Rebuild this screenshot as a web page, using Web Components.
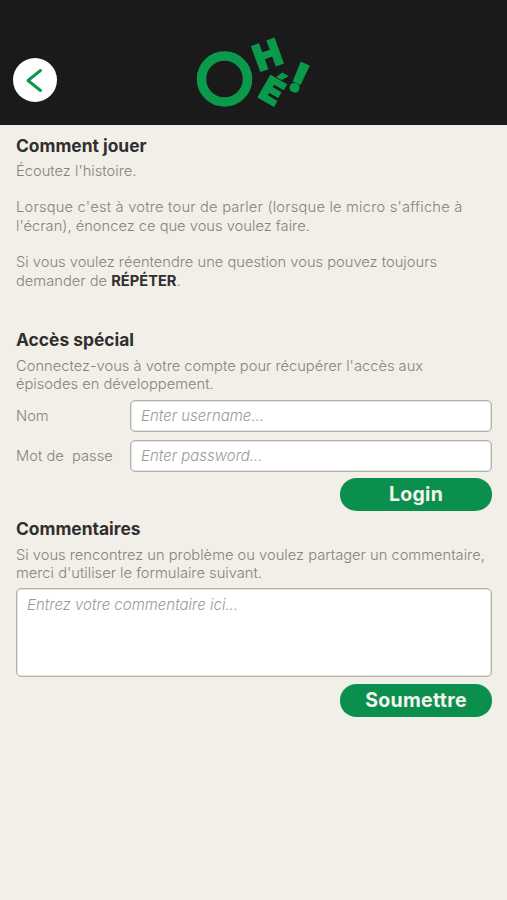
<!DOCTYPE html>
<html lang="fr">
<head>
<meta charset="utf-8">
<title>Ohé</title>
<style>
  html, body { margin: 0; height: 100%; background: #f2efe8; }
  body { font-family: Inter, "Liberation Sans", sans-serif; min-height: 900px; }
</style>
</head>
<body>
<app-header></app-header>
<main-page></main-page>

<script>
class AppHeader extends HTMLElement {
  connectedCallback() {
    this.attachShadow({ mode: 'open' });
    this.shadowRoot.innerHTML = `
      <style>
        :host { display: block; height: 125px; background: #1a1a1a; position: relative; }
        .back {
          position: absolute; left: 13px; top: 58px;
          width: 44px; height: 44px; border-radius: 50%;
          background: #fff; display: flex; align-items: center; justify-content: center;
        }
        svg { display: block; }
        .logo { position: absolute; left: 170px; top: 15px; overflow: visible; }
        text {
          font-family: Inter, "Liberation Sans", sans-serif; font-weight: 900; text-anchor: middle;
          fill: #0b9a4c; stroke: #0b9a4c; stroke-width: 1.4px;
        }
      </style>
      <div class="back">
        <svg width="20" height="26" viewBox="0 0 20 26">
          <path d="M15.5 3.5 L3 13.5 L15.5 23.5" fill="none" stroke="#0b9a4c" stroke-width="3" stroke-linecap="round" stroke-linejoin="round"/>
        </svg>
      </div>
      <svg class="logo" width="160" height="105" viewBox="0 0 160 105">
        <circle cx="54.5" cy="64" r="23" fill="none" stroke="#0b9a4c" stroke-width="9.5"/>
        <text font-size="36" transform="translate(97.5 40) rotate(-20) translate(0 13)">H</text>
        <text font-size="34" transform="translate(102 76) rotate(30) translate(0 12)">É</text>
        <text font-size="40" transform="translate(129 63) rotate(24) translate(0 14)">!</text>
      </svg>
    `;
  }
}

class InfoSection extends HTMLElement {
  connectedCallback() {
    this.attachShadow({ mode: 'open' });
    this.shadowRoot.innerHTML = `
      <style>
        :host { display: block; }
        h2 {
          margin: 0 0 var(--title-gap, 6px); font-size: 17.4px; line-height: 22px; font-weight: 700;
          color: #2f2f2f;
        }
        .body {
          font-size: 14.7px; line-height: 18.4px; font-weight: 300; color: #85837d;
        }
      </style>
      <h2>${this.getAttribute('heading')}</h2>
      <div class="body"><slot></slot></div>
    `;
  }
}

class FieldRow extends HTMLElement {
  connectedCallback() {
    this.attachShadow({ mode: 'open' });
    this.shadowRoot.innerHTML = `
      <style>
        :host { display: flex; align-items: center; height: 32px; }
        label {
          width: 114px; flex: none; font-size: 14.7px; font-weight: 300; color: #85837d;
          white-space: pre;
        }
        input {
          flex: 1; min-width: 0; height: 32px; box-sizing: border-box;
          border: 1px solid #b5b2aa; box-shadow: inset 0 0 0 .5px #c8c5bd; border-radius: 5px;
          background: #fff; padding: 0 10px; outline: none;
          font: italic 300 15px Inter, "Liberation Sans", sans-serif;
        }
        input::placeholder { color: #9a9a9a; opacity: 1; }
      </style>
      <label>${this.getAttribute('label')}</label>
      <input placeholder="${this.getAttribute('placeholder')}">
    `;
  }
}

class GreenButton extends HTMLElement {
  connectedCallback() {
    this.attachShadow({ mode: 'open' });
    this.shadowRoot.innerHTML = `
      <style>
        :host { display: flex; justify-content: flex-end; }
        button {
          width: 152px; height: 33px; padding: 0; border: 0; border-radius: 16.5px / 16px;
          background: #0b8f4d; color: #f4f4ee;
          font: 700 19.5px Inter, "Liberation Sans", sans-serif;
          letter-spacing: .3px;
        }
      </style>
      <button><slot></slot></button>
    `;
  }
}

class CommentBox extends HTMLElement {
  connectedCallback() {
    this.attachShadow({ mode: 'open' });
    this.shadowRoot.innerHTML = `
      <style>
        :host { display: block; height: 89px; }
        textarea {
          display: block; width: 100%; height: 100%; box-sizing: border-box; resize: none;
          border: 1px solid #b5b2aa; box-shadow: inset 0 0 0 .5px #c8c5bd; border-radius: 5px;
          background: #fff; padding: 6px 10px; outline: none;
          font: italic 300 15px Inter, "Liberation Sans", sans-serif;
        }
        textarea::placeholder { color: #9a9a9a; opacity: 1; }
      </style>
      <textarea placeholder="Entrez votre commentaire ici..."></textarea>
    `;
  }
}

class MainPage extends HTMLElement {
  connectedCallback() {
    this.attachShadow({ mode: 'open' });
    this.shadowRoot.innerHTML = `
      <style>
        :host { display: block; padding: 10px 15px 0 16px; }
        b { font-weight: 700; color: #2f2f2f; }
        p { margin: 0; }
        .gap { height: 18px; }
        .wide { letter-spacing: .2px; }
        .login { display: flex; flex-direction: column; gap: 8px; margin-top: 6px; }
        green-button { margin-top: 6px; }
        .s1 { --title-gap: 5px; }
        .s2 { margin-top: 39px; }
        .s3 { margin-top: 7px; }
        comment-box { margin-top: 5px; }
        .s3-btn { margin-top: 7px; }
      </style>
      <info-section class="s1" heading="Comment jouer">
        <p>Écoutez l'histoire.</p>
        <div class="gap"></div>
        <p><span class="wide">Lorsque c'est à votre tour de parler (lorsque le micro s'affiche à</span> l'écran), énoncez ce que vous voulez faire.</p>
        <div class="gap"></div>
        <p>Si vous voulez réentendre une question vous pouvez toujours demander de <b>RÉPÉTER</b>.</p>
      </info-section>
      <info-section class="s2" heading="Accès spécial">
        <p>Connectez-vous à votre compte pour récupérer l'accès aux<br>épisodes en développement.</p>
      </info-section>
      <div class="login">
        <field-row label="Nom" placeholder="Enter username..."></field-row>
        <field-row label="Mot de  passe" placeholder="Enter password..."></field-row>
      </div>
      <green-button>Login</green-button>
      <info-section class="s3" heading="Commentaires">
        <p>Si vous rencontrez un problème ou voulez partager un commentaire, merci d'utiliser le formulaire suivant.</p>
      </info-section>
      <comment-box></comment-box>
      <green-button class="s3-btn">Soumettre</green-button>
    `;
  }
}

customElements.define('app-header', AppHeader);
customElements.define('info-section', InfoSection);
customElements.define('field-row', FieldRow);
customElements.define('green-button', GreenButton);
customElements.define('comment-box', CommentBox);
customElements.define('main-page', MainPage);
</script>
</body>
</html>
